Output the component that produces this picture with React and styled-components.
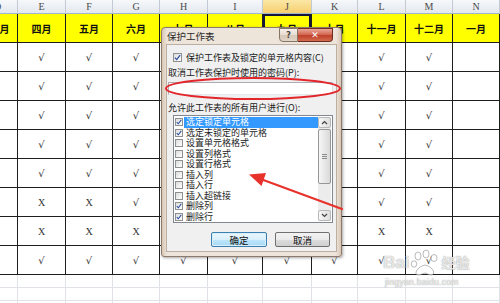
import React from 'react';
import styled, { createGlobalStyle, css } from 'styled-components';

const Global = createGlobalStyle`
  html, body { margin: 0; padding: 0; width: 500px; height: 303px; overflow: hidden; background: #fff; }
  #root { position: relative; width: 500px; height: 303px; overflow: hidden; }
`;

const CJK = `"Noto Sans CJK SC", "Noto Sans", sans-serif`;
/* columns H–K lie under the dialog except for their last row */
const UNDER = ['', '', '', '', '', '', '', '√'];
const COLS = [
  { key: 'D', w: 40, month: '三月', data: Array(8).fill(''), shift: 4 },
  { key: 'E', w: 48, month: '四月', data: ['√', '√', '√', '√', '√', 'X', 'X', '√'] },
  { key: 'F', w: 47, month: '五月', data: ['√', '√', '√', '√', '√', 'X', 'X', '√'] },
  { key: 'G', w: 47, month: '六月', data: ['√', '√', '√', '√', '√', '√', 'X', '√'] },
  { key: 'H', w: 48, month: '七月', data: UNDER },
  { key: 'I', w: 55, month: '八月', data: UNDER },
  { key: 'J', w: 49, month: '九月', data: UNDER, selected: true },
  { key: 'K', w: 46, month: '十月', data: UNDER },
  { key: 'L', w: 48, month: '十一月', data: ['√', '√', '√', '√', '√', '√', 'X', '√'] },
  { key: 'M', w: 47, month: '十二月', data: ['√', '√', '√', '√', '√', '√', 'X', '√'] },
  { key: 'N', w: 47, month: '一月', data: Array(8).fill('') },
];

const Page = styled.div`
  position: relative;
  width: 500px;
  height: 303px;
  overflow: hidden;
`;

const Sheet = styled.div`
  display: grid;
  grid-template-columns: ${(p) => p.$cols};
  margin-left: -22px;
  width: 522px;
`;

const cellBase = css`
  box-sizing: border-box;
  display: flex;
  align-items: center;
  justify-content: center;
`;

const LetterCell = styled.div`
  ${cellBase};
  height: 14px;
  border-right: 1px solid #c3cad3;
  border-bottom: 1px solid #9eb6ce;
  background: ${(p) => (p.$active ? 'linear-gradient(#fbe7a6, #f6cf6e)' : 'linear-gradient(#f6f8fb, #e3e8ee)')};
  font-family: "Liberation Serif", serif;
  font-size: 10px;
  color: #4a4a4a;
`;

const HeadCell = styled.div`
  ${cellBase};
  height: 29px;
  padding-left: ${(p) => p.$shift || 0}px;
  background: #ffff00;
  border-right: 1px solid #1e1e1e;
  border-bottom: 1px solid #1e1e1e;
  font-family: ${CJK};
  font-size: 10px;
  font-weight: 700;
  color: #111;
  white-space: nowrap;
  overflow: hidden;
  ${(p) => p.$selected && css`box-shadow: inset 0 0 0 2px #14163a;`}
`;

const DataCell = styled.div`
  ${cellBase};
  height: 29px;
  background: #fff;
  border-right: 1px solid #1e1e1e;
  border-bottom: 1px solid #1e1e1e;
  font-family: ${(p) => (p.$mark === 'X' ? '"Liberation Serif", serif' : '"DejaVu Serif", serif')};
  font-size: 10px;
  color: #333;
  font-style: ${(p) => (p.$mark === 'X' ? 'normal' : 'italic')};
`;

const BlankCell = styled.div`
  box-sizing: border-box;
  height: 13px;
  border-right: 1px solid #dfe2e6;
  border-bottom: 1px solid #dfe2e6;
`;

/* ---------- dialog ---------- */

const Dialog = styled.div`
  position: absolute;
  left: 161px;
  top: 27px;
  width: 181px;
  height: 230px;
  box-sizing: border-box;
  border: 1px solid #8c7b6c;
  border-radius: 4px 4px 3px 3px;
  background: linear-gradient(90deg, #d9c6b4 0, #ede4da 5px, #ede4da calc(100% - 5px), #d9c6b4 100%);
  padding: 0 4px 4px 4px;
  display: flex;
  flex-direction: column;
  box-shadow: 1px 1px 3px rgba(0, 0, 0, 0.35);
`;

const TitleBar = styled.div`
  height: 16px;
  display: flex;
  align-items: flex-start;
  justify-content: space-between;
`;

const Title = styled.div`
  font-family: ${CJK};
  font-size: 9.5px;
  line-height: 17px;
  color: #2a2a2a;
  padding-left: 1px;
`;

const WinButtons = styled.div`
  display: flex;
  margin-right: 4px;
`;

const WinBtn = styled.div`
  box-sizing: border-box;
  height: 14px;
  display: flex;
  align-items: center;
  justify-content: center;
  font-family: "DejaVu Sans", sans-serif;
  font-weight: 700;
  ${(p) =>
    p.$close
      ? css`
          width: 35px;
          border: 1px solid #6e2b22;
          border-left: none;
          border-radius: 0 0 4px 0;
          background: linear-gradient(#e9a898 0%, #d46a55 45%, #c0412b 55%, #d26a4e 100%);
          color: #fff;
          font-size: 9px;
        `
      : css`
          width: 19px;
          border: 1px solid #857565;
          border-radius: 0 0 0 4px;
          background: linear-gradient(#f6f0ea 0%, #e6dbd0 50%, #d6c7b8 55%, #e2d6ca 100%);
          color: #4a4038;
          font-size: 8px;
        `}
`;

const Panel = styled.div`
  flex: 1;
  background: #f0f0f0;
  border: 1px solid #bcaea0;
  padding: 0 3px 0 0;
  display: flex;
  flex-direction: column;
`;

const Row = styled.div`
  display: flex;
  align-items: center;
  height: 12px;
  margin-top: ${(p) => p.$mt}px;
  margin-left: ${(p) => p.$ml || 0}px;
  font-family: ${CJK};
  font-size: 9px;
  color: #1a1a1a;
  white-space: nowrap;
`;

const RowLabel = styled.span`
  margin-left: 4px;
`;

const Box = styled.span`
  box-sizing: border-box;
  width: ${(p) => p.$size}px;
  height: ${(p) => p.$size}px;
  flex: none;
  border: 1px solid #8e8f8f;
  background: linear-gradient(135deg, #dcdcdc, #fff);
  display: flex;
  align-items: center;
  justify-content: center;
`;

const Input = styled.div`
  box-sizing: border-box;
  height: 13px;
  margin-top: 4px;
  margin-left: 1px;
  background: #fff;
  border: 1px solid #abadb3;
  border-right-color: #dbdfe6;
  border-bottom-color: #e3e9ef;
`;

const ListBox = styled.div`
  box-sizing: border-box;
  height: 108px;
  margin: 2px 0 0 6px;
  background: #fff;
  border: 1px solid #828790;
  display: flex;
`;

const Items = styled.div`
  flex: 1;
  padding: 1px 0 0 1px;
  display: flex;
  flex-direction: column;
`;

const Item = styled.div`
  display: flex;
  align-items: center;
  height: 10.5px;
  font-family: ${CJK};
  font-size: 9px;
  color: #1a1a1a;
  white-space: nowrap;
`;

const ItemText = styled.span`
  flex: 1;
  margin-left: 1px;
  padding-left: 2px;
  height: 10.5px;
  line-height: 10.5px;
  ${(p) =>
    p.$selected &&
    css`
      background: #3399ff;
      color: #fff;
    `}
`;

const Scroll = styled.div`
  width: 13px;
  margin: 1px 1px 1px 0;
  background: #ececec;
  display: flex;
  flex-direction: column;
`;

const ScrollBtn = styled.div`
  box-sizing: border-box;
  height: 11px;
  border: 1px solid #b8b8b8;
  border-radius: 2px;
  background: linear-gradient(90deg, #f7f7f7, #dedede);
  display: flex;
  align-items: center;
  justify-content: center;
`;

const Track = styled.div`
  flex: 1;
  padding-top: 1px;
`;

const Thumb = styled.div`
  box-sizing: border-box;
  height: 55px;
  border: 1px solid #979797;
  border-radius: 2px;
  background: linear-gradient(90deg, #f6f6f6, #d9d9d9);
  display: flex;
  flex-direction: column;
  align-items: center;
  justify-content: center;
  gap: 1px;
`;

const Grip = styled.span`
  width: 5px;
  height: 1px;
  background: #8a8a8a;
`;

const ButtonRow = styled.div`
  display: flex;
  justify-content: flex-end;
  gap: 8px;
  margin-top: 9px;
  padding-right: 3px;
`;

const Btn = styled.div`
  box-sizing: border-box;
  width: ${(p) => p.$w}px;
  height: 15px;
  border: 1px solid ${(p) => (p.$focus ? '#3c7fb1' : '#707070')};
  border-radius: 2px;
  background: ${(p) =>
    p.$focus
      ? 'linear-gradient(#eaf6fd 0%, #d9f0fc 50%, #bee6fd 52%, #a7d9f5 100%)'
      : 'linear-gradient(#f2f2f2 0%, #ebebeb 50%, #dddddd 52%, #cfcfcf 100%)'};
  ${(p) => p.$focus && css`box-shadow: inset 0 0 0 1px #d8eefb;`}
  display: flex;
  align-items: center;
  justify-content: center;
  font-family: ${CJK};
  font-size: 9.5px;
  color: #111;
`;

/* ---------- overlays ---------- */

const Annot = styled.svg`
  position: absolute;
  left: 0;
  top: 0;
  width: 500px;
  height: 303px;
  pointer-events: none;
`;

const Watermark = styled.div`
  position: absolute;
  left: 383px;
  top: 247px;
  display: flex;
  flex-direction: column;
  align-items: flex-start;
  color: rgba(255, 255, 255, 0.75);
  text-shadow: 0 0 1px rgba(120, 120, 120, 0.5), 0 0 1px rgba(120, 120, 120, 0.5);
  pointer-events: none;
`;

const WmTop = styled.div`
  display: flex;
  align-items: flex-end;
  font-family: "Liberation Sans", ${CJK};
  font-weight: 700;
  font-size: 17px;
  line-height: 28px;
  height: 30px;
`;

const WmCn = styled.span`
  font-size: 14px;
`;

const WmSmall = styled.div`
  font-family: "Liberation Sans", sans-serif;
  font-size: 8.5px;
  letter-spacing: 0.3px;
  margin-left: 2px;
`;

const Check = ({ size = 9 }) => (
  <svg width={size - 2} height={size - 2} viewBox="0 0 8 8">
    <path d="M1 4.2 L3.1 6.4 L7 1.2" fill="none" stroke="#2b4f9e" strokeWidth="1.4" />
  </svg>
);

const Arrow = ({ up }) => (
  <svg width="7" height="5" viewBox="0 0 7 5">
    <path d={up ? 'M1 4 L3.5 1.5 L6 4' : 'M1 1 L3.5 3.5 L6 1'} fill="none" stroke="#444" strokeWidth="1.2" />
  </svg>
);

const ITEMS = [
  ['选定锁定单元格', true, true],
  ['选定未锁定的单元格', true, false],
  ['设置单元格格式', false, false],
  ['设置列格式', false, false],
  ['设置行格式', false, false],
  ['插入列', false, false],
  ['插入行', false, false],
  ['插入超链接', false, false],
  ['删除列', true, false],
  ['删除行', true, false],
];

export default function App() {
  const colTemplate = COLS.map((c) => `${c.w}px`).join(' ');
  return (
    <Page>
      <Global />
      <Sheet $cols={colTemplate}>
        {COLS.map((c) => (
          <LetterCell key={'l' + c.key} $active={c.selected}>{c.key}</LetterCell>
        ))}
        {COLS.map((c) => (
          <HeadCell key={'h' + c.key} $selected={c.selected} $shift={c.shift}>{c.month}</HeadCell>
        ))}
        {Array.from({ length: 8 }).map((_, r) =>
          COLS.map((c) => (
            <DataCell key={`d${r}${c.key}`} $mark={c.data[r]}>{c.data[r]}</DataCell>
          ))
        )}
        {Array.from({ length: 3 }).map((_, r) =>
          COLS.map((c) => <BlankCell key={`b${r}${c.key}`} />)
        )}
      </Sheet>

      <Dialog>
        <TitleBar>
          <Title>保护工作表</Title>
          <WinButtons>
            <WinBtn>?</WinBtn>
            <WinBtn $close>✕</WinBtn>
          </WinButtons>
        </TitleBar>
        <Panel>
          <Row $mt={6} $ml={6}>
            <Box $size={9}><Check /></Box>
            <RowLabel>保护工作表及锁定的单元格内容(C)</RowLabel>
          </Row>
          <Row $mt={3} $ml={1}>取消工作表保护时使用的密码(P):</Row>
          <Input />
          <Row $mt={6} $ml={1}>允许此工作表的所有用户进行(O):</Row>
          <ListBox>
            <Items>
              {ITEMS.map(([label, checked, selected]) => (
                <Item key={label}>
                  <Box $size={8}>{checked && <Check size={8} />}</Box>
                  <ItemText $selected={selected}>{label}</ItemText>
                </Item>
              ))}
            </Items>
            <Scroll>
              <ScrollBtn><Arrow up /></ScrollBtn>
              <Track>
                <Thumb>
                  <Grip />
                  <Grip />
                  <Grip />
                </Thumb>
              </Track>
              <ScrollBtn><Arrow /></ScrollBtn>
            </Scroll>
          </ListBox>
          <ButtonRow>
            <Btn $w={56} $focus>确定</Btn>
            <Btn $w={55}>取消</Btn>
          </ButtonRow>
        </Panel>
      </Dialog>

      <Annot viewBox="0 0 500 303">
        <ellipse cx="253" cy="88.5" rx="87" ry="10.5" fill="none" stroke="#e3262b" strokeWidth="2" />
        <path d="M342 209 L262 179.5" stroke="#e8322c" strokeWidth="2.2" strokeLinecap="round" />
        <path d="M249 174.5 L266 173 L261.5 186 Z" fill="#e8322c" />
      </Annot>

      <Watermark>
        <WmTop>
          <span>Bai</span>
          <svg width="30" height="28" viewBox="0 0 30 28" style={{ margin: '0 1px' }}>
            <g fill="rgba(255,255,255,0.7)" stroke="rgba(120,120,120,0.5)" strokeWidth="1">
              <ellipse cx="8" cy="7" rx="3" ry="4" />
              <ellipse cx="16" cy="5" rx="3" ry="4" />
              <ellipse cx="24" cy="9" rx="3" ry="3.5" />
              <ellipse cx="4" cy="15" rx="2.8" ry="3.2" />
              <path d="M8 26 C4 26 6 18 15 16 C24 18 26 26 21 26 C18 26 17 24 15 24 C13 24 12 26 8 26 Z" />
            </g>
          </svg>
          <WmCn>经验</WmCn>
        </WmTop>
        <WmSmall>jingyan.baidu.com</WmSmall>
      </Watermark>
    </Page>
  );
}
